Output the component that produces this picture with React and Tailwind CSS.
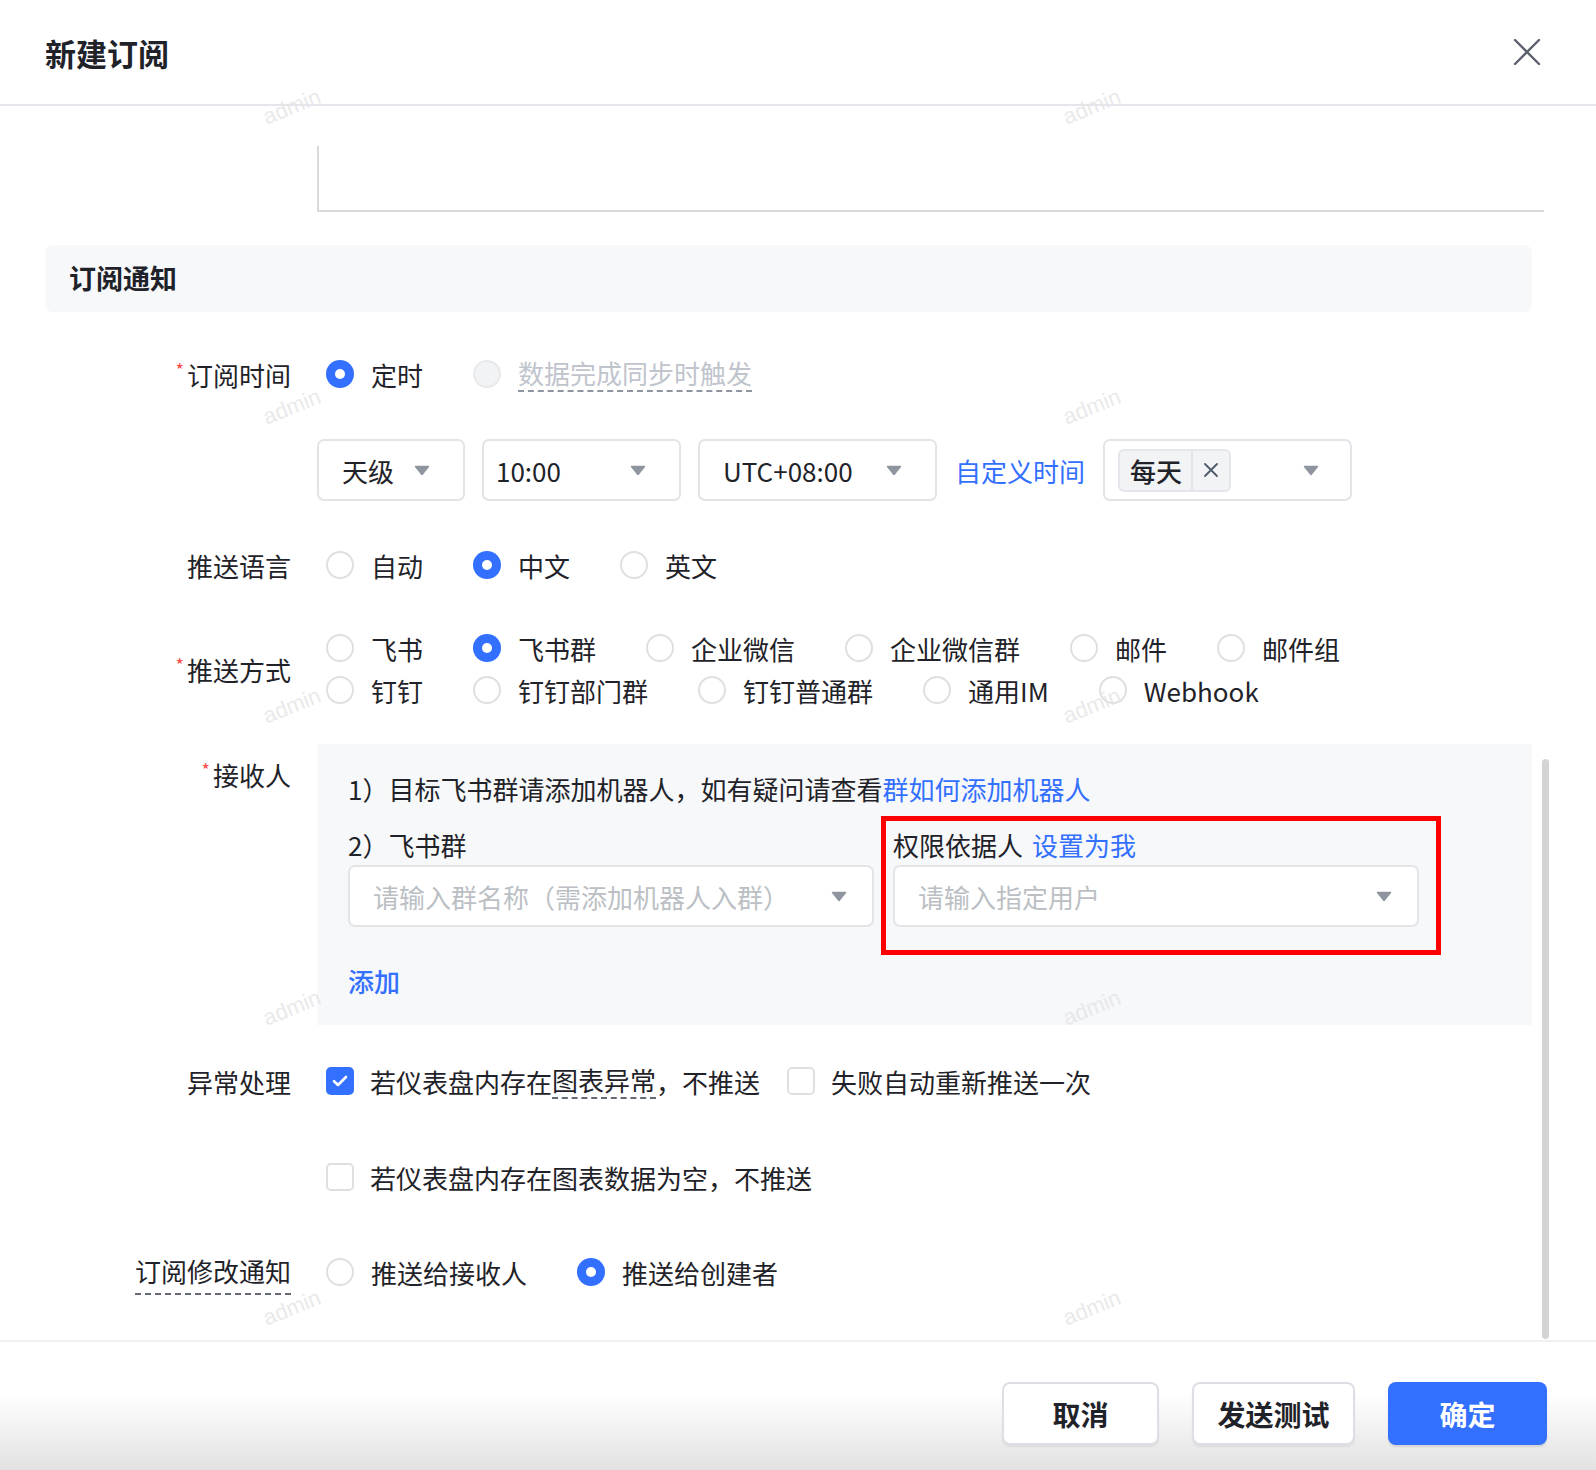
import React from "react";

const Arrow = ({ className = "" }) => (
  <svg width="16" height="11" viewBox="0 0 16 11" className={className}>
    <path d="M1.5 1.5 H14.5 L8 9.5 Z" fill="#8f959e" stroke="#8f959e" strokeWidth="1.5" strokeLinejoin="round" />
  </svg>
);

const Radio = ({ checked, disabled, children }) => {
  let dot = "border-2 border-[#dee0e3] bg-white";
  if (checked) dot = "bg-[#3370ff] border-0";
  if (disabled) dot = "bg-[#f2f3f5] border-2 border-[#e8e9eb]";
  return (
    <div className="flex items-center gap-[17px]">
      <span className={`w-[28px] h-[28px] rounded-full flex items-center justify-center shrink-0 ${dot}`}>
        {checked && <span className="w-[10px] h-[10px] rounded-full bg-white" />}
      </span>
      {children}
    </div>
  );
};

const Checkbox = ({ checked, children }) => (
  <div className="flex items-center gap-[16px]">
    {checked ? (
      <span className="w-[28px] h-[28px] rounded-[5px] bg-[#3370ff] flex items-center justify-center shrink-0">
        <svg width="16" height="12" viewBox="0 0 16 12">
          <path d="M2 6.2 L6 10 L14 2" fill="none" stroke="white" strokeWidth="2.6" strokeLinecap="round" strokeLinejoin="round" />
        </svg>
      </span>
    ) : (
      <span className="w-[28px] h-[28px] rounded-[5px] border-2 border-[#dee0e3] bg-white shrink-0" />
    )}
    {children}
  </div>
);

const Label = ({ required, children, className = "" }) => (
  <div className={`w-[291px] shrink-0 flex justify-end ${className}`}>
    <span className="flex items-center">
      {required && <span className="text-[#f54a45] text-[18px] leading-none mr-[3px] -mt-[10px]">*</span>}
      {children}
    </span>
  </div>
);

const Select = ({ width, children, pl = "pl-[23px]", pr = "pr-[33px]" }) => (
  <div className={`${width} h-[62px] rounded-[7px] border-2 border-[#e2e4e8] bg-white flex items-center justify-between ${pl} ${pr}`}>
    {children}
  </div>
);

const marks = [107, 407, 706, 1008, 1308];

export default function App() {
  return (
    <div
      className="relative w-full h-[1470px] overflow-hidden bg-white text-[#1f2329] text-[26px]"
      style={{ fontFamily: '"Noto Sans CJK SC", "Noto Sans", sans-serif' }}
    >
      {/* header */}
      <div className="h-[106px] border-b-2 border-[#e5e6eb] flex items-center justify-between pl-[45px] pr-[55px]">
        <h1 className="text-[31px] font-bold leading-none">新建订阅</h1>
        <svg width="28" height="28" viewBox="0 0 28 28">
          <path d="M2 2 L26 26 M26 2 L2 26" stroke="#5b626c" strokeWidth="2.4" strokeLinecap="round" />
        </svg>
      </div>

      {/* body */}
      <div className="relative h-[1234px] overflow-hidden">
        <div className="ml-[317px] w-[1227px] mt-[40px] h-[66px] border-l-2 border-b-2 border-[#d9dadc]" />

        <div className="ml-[45px] w-[1487px] mt-[33px] h-[67px] rounded-[8px] bg-[#f7f8fa] flex items-center pl-[24px]">
          <span className="text-[27px] font-bold">订阅通知</span>
        </div>

        {/* 订阅时间 */}
        <div className="mt-[42px] h-[40px] flex items-center">
          <Label required>订阅时间</Label>
          <div className="ml-[35px] flex items-center gap-[50px]">
            <Radio checked>定时</Radio>
            <Radio disabled>
              <span className="inline-block leading-[34px] border-b-2 border-dashed border-[#8f959e] text-[#c0c4cc]">数据完成同步时触发</span>
            </Radio>
          </div>
        </div>

        <div className="mt-[45px] ml-[317px] flex items-center gap-[17px]">
          <Select width="w-[148px]">
            <span>天级</span>
            <Arrow />
          </Select>
          <Select width="w-[199px]" pl="pl-[12px]">
            <span>10:00</span>
            <Arrow />
          </Select>
          <Select width="w-[239px]">
            <span>UTC+08:00</span>
            <Arrow />
          </Select>
          <span className="text-[#3370ff] mx-[1px]">自定义时间</span>
          <Select width="w-[249px]" pl="pl-[13px]" pr="pr-[31px]">
            <span className="h-[43px] rounded-[6px] border-2 border-[#e5e6eb] bg-[#f2f3f5] flex items-center">
              <span className="pl-[10px] pr-[9px] font-medium border-r-2 border-[#e5e6eb] h-full flex items-center">每天</span>
              <span className="px-[10px] flex items-center">
                <svg width="16" height="16" viewBox="0 0 16 16">
                  <path d="M2 2 L14 14 M14 2 L2 14" stroke="#4e5969" strokeWidth="1.8" strokeLinecap="round" />
                </svg>
              </span>
            </span>
            <Arrow />
          </Select>
        </div>

        {/* 推送语言 */}
        <div className="mt-[44px] h-[40px] flex items-center">
          <Label>推送语言</Label>
          <div className="ml-[35px] flex items-center gap-[50px]">
            <Radio>自动</Radio>
            <Radio checked>中文</Radio>
            <Radio>英文</Radio>
          </div>
        </div>

        {/* 推送方式 */}
        <div className="mt-[42px] h-[84px] flex items-center">
          <Label required>推送方式</Label>
          <div className="ml-[35px] flex flex-col">
            <div className="h-[42px] flex items-center gap-[50px]">
              <Radio>飞书</Radio>
              <Radio checked>飞书群</Radio>
              <Radio>企业微信</Radio>
              <Radio>企业微信群</Radio>
              <Radio>邮件</Radio>
              <Radio>邮件组</Radio>
            </div>
            <div className="h-[42px] flex items-center gap-[50px]">
              <Radio>钉钉</Radio>
              <Radio>钉钉部门群</Radio>
              <Radio>钉钉普通群</Radio>
              <Radio>通用IM</Radio>
              <Radio>Webhook</Radio>
            </div>
          </div>
        </div>

        {/* 接收人 */}
        <div className="mt-[33px] flex items-start">
          <Label required className="pt-[10px] h-[50px]">
            接收人
          </Label>
          <div className="ml-[26px] w-[1215px] bg-[#f7f8fa] pl-[31px] pt-[24px] pb-[25px]">
            <div className="h-[40px] flex items-center">
              <span>1）目标飞书群请添加机器人，如有疑问请查看</span>
              <span className="text-[#3370ff]">群如何添加机器人</span>
            </div>
            <div className="mt-[16px] flex gap-[19px]">
              <div className="w-[526px]">
                <div className="h-[40px] flex items-center">2）飞书群</div>
                <div className="mt-[1px]">
                  <Select width="w-[526px]" pl="pl-[23px]" pr="pr-[25px]">
                    <span className="text-[#bbbfc4]">请输入群名称（需添加机器人入群）</span>
                    <Arrow />
                  </Select>
                </div>
              </div>
              <div className="w-[526px] relative">
                <div className="h-[40px] flex items-center">
                  <span>权限依据人</span>
                  <span className="text-[#3370ff] ml-[9px]">设置为我</span>
                </div>
                <div className="mt-[1px]">
                  <Select width="w-[526px]" pl="pl-[23px]" pr="pr-[25px]">
                    <span className="text-[#bbbfc4]">请输入指定用户</span>
                    <Arrow />
                  </Select>
                </div>
                <div className="absolute -left-[12px] -top-[8px] -right-[22px] -bottom-[28px] border-[5px] border-[#ff0000] pointer-events-none" />
              </div>
            </div>
            <div className="mt-[33px] h-[40px] flex items-center">
              <span className="text-[#3370ff] font-medium">添加</span>
            </div>
          </div>
        </div>

        {/* 异常处理 */}
        <div className="mt-[36px] h-[40px] flex items-center">
          <Label>异常处理</Label>
          <div className="ml-[35px] flex items-center gap-[27px]">
            <Checkbox checked>
              <span className="flex items-center">
                若仪表盘内存在
                <span className="inline-block leading-[34px] border-b-2 border-dashed border-[#646a73]">图表异常</span>
                ，不推送
              </span>
            </Checkbox>
            <Checkbox>失败自动重新推送一次</Checkbox>
          </div>
        </div>

        <div className="mt-[56px] h-[40px] flex items-center">
          <Label />
          <div className="ml-[35px]">
            <Checkbox>若仪表盘内存在图表数据为空，不推送</Checkbox>
          </div>
        </div>

        {/* 订阅修改通知 */}
        <div className="mt-[55px] h-[40px] flex items-center">
          <Label>
            <span className="inline-block leading-[44px] border-b-2 border-dashed border-[#646a73]">订阅修改通知</span>
          </Label>
          <div className="ml-[35px] flex items-center gap-[50px]">
            <Radio>推送给接收人</Radio>
            <Radio checked>推送给创建者</Radio>
          </div>
        </div>

        {/* scrollbar */}
        <div className="absolute left-[1542px] top-[653px] w-[7px] h-[580px] rounded-full bg-[#d4d4d4]" />
      </div>

      {/* footer */}
      <div className="h-[130px] border-t-2 border-[#eff0f1] bg-gradient-to-b from-white from-40% to-[#e2e2e2] flex justify-end items-start pt-[40px] pr-[49px] gap-[33px]">
        <button className="w-[157px] h-[63px] rounded-[8px] border-2 border-[#dcdfe3] bg-white text-[28px] font-bold shadow-[0_2px_2px_rgba(0,0,0,0.06)]">
          取消
        </button>
        <button className="w-[163px] h-[63px] rounded-[8px] border-2 border-[#dcdfe3] bg-white text-[28px] font-bold shadow-[0_2px_2px_rgba(0,0,0,0.06)]">
          发送测试
        </button>
        <button className="w-[159px] h-[63px] rounded-[8px] bg-[#3370ff] text-white text-[28px] font-bold shadow-[0_2px_2px_rgba(0,0,0,0.1)]">
          确定
        </button>
      </div>

      {/* watermark */}
      {marks.map((y) =>
        [292, 1092].map((x) => (
          <span
            key={`${x}-${y}`}
            className="absolute text-[22px] leading-none text-[#e4e5e7] opacity-80 pointer-events-none -rotate-[22deg] -translate-x-1/2 -translate-y-1/2"
            style={{ left: x, top: y, fontFamily: '"Liberation Sans", sans-serif' }}
          >
            admin
          </span>
        ))
      )}
    </div>
  );
}
